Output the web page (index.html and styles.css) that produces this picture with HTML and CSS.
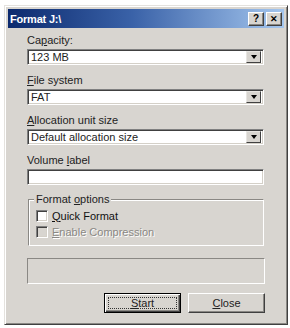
FILE: index.html
```html
<!DOCTYPE html>
<html>
<head>
<meta charset="utf-8">
<link rel="stylesheet" href="styles.css">
</head>
<body>
<div class="window">
  <div class="titlebar">
    <span class="title">Format J:\</span>
    <div class="tbtns">
      <span class="tbtn">?</span>
      <span class="tbtn x">✕</span>
    </div>
  </div>
  <div class="content">
    <div class="field">
      <div class="label">Ca<u>p</u>acity:</div>
      <div class="combo"><span class="val">123 MB</span><span class="drop"><i class="arrow"></i></span></div>
    </div>
    <div class="field">
      <div class="label"><u>F</u>ile system</div>
      <div class="combo"><span class="val">FAT</span><span class="drop"><i class="arrow"></i></span></div>
    </div>
    <div class="field">
      <div class="label"><u>A</u>llocation unit size</div>
      <div class="combo"><span class="val">Default allocation size</span><span class="drop"><i class="arrow"></i></span></div>
    </div>
    <div class="field">
      <div class="label">Volume <u>l</u>abel</div>
      <div class="input"></div>
    </div>
    <div class="group">
      <div class="legend">Format <u>o</u>ptions</div>
      <div class="check"><span class="box"></span><span><u>Q</u>uick Format</span></div>
      <div class="check disabled"><span class="box"></span><span><u>E</u>nable Compression</span></div>
    </div>
    <div class="progress"></div>
    <div class="buttons">
      <div class="btn default"><span class="focus"><u>S</u>tart</span></div>
      <div class="btn"><span><u>C</u>lose</span></div>
    </div>
  </div>
</div>
</body>
</html>
```
FILE: styles.css
```css
* { box-sizing: border-box; }
html, body { margin: 0; padding: 0; background: #fff; }
body {
  font-family: "Liberation Sans", Arial, sans-serif;
  font-size: 11px;
  color: #111;
}
.window {
  margin: 5px 0 0 4px;
  width: 284px;
  height: 320px;
  background: #d8d5d0;
  border: 1px solid;
  border-color: #e4e2de #404040 #404040 #e4e2de;
  box-shadow: inset 1px 1px 0 #fff, inset -1px -1px 0 #8a8884;
  padding: 3px;
  display: flex;
  flex-direction: column;
}
.titlebar {
  height: 19px;
  background: linear-gradient(to right, #0c2a6e 0%, #3a62a8 45%, #a4c6ee 100%);
  display: flex;
  align-items: center;
  justify-content: space-between;
  padding: 0 2px 0 2px;
}
.title {
  color: #fff;
  font-weight: bold;
  font-size: 11px;
  letter-spacing: -0.2px;
}
.tbtns { display: flex; gap: 2px; }
.tbtn {
  width: 16px;
  height: 14px;
  background: #d8d5d0;
  border: 1px solid;
  border-color: #fff #404040 #404040 #fff;
  box-shadow: inset -1px -1px 0 #8a8884;
  font-weight: bold;
  font-size: 10px;
  line-height: 12px;
  text-align: center;
  color: #000;
}
.tbtn.x { font-size: 9px; }
.content {
  padding: 6px 20px 0 19px;
  display: flex;
  flex-direction: column;
}
.field { margin-bottom: 9px; }
.label { height: 13px; line-height: 13px; margin-bottom: 2px; color: #222; }
.combo, .input {
  height: 16px;
  background: #fff;
  border: 1px solid;
  border-color: #808080 #fff #fff #808080;
  box-shadow: inset 1px 1px 0 #404040, inset -1px -1px 0 #d4d0c8;
  display: flex;
  align-items: center;
  padding: 2px;
}
.val { flex: 1; padding-left: 1px; line-height: 12px; color: #222; }
.drop {
  width: 15px;
  height: 12px;
  background: #d8d5d0;
  border: 1px solid;
  border-color: #e8e6e2 #404040 #404040 #e8e6e2;
  display: flex;
  align-items: center;
  justify-content: center;
}
.arrow {
  width: 0; height: 0;
  border-left: 3.5px solid transparent;
  border-right: 3.5px solid transparent;
  border-top: 4px solid #000;
}
.group {
  position: relative;
  margin-top: 5px;
  margin-left: 1px;
  height: 47px;
  border: 1px solid;
  border-color: #8a8884 #fff #fff #8a8884;
  box-shadow: inset 1px 1px 0 #fff;
  padding: 9px 0 0 7px;
  display: flex;
  flex-direction: column;
  gap: 3px;
}
.legend {
  position: absolute;
  top: -7px;
  left: 5px;
  padding: 0 2px;
  background: #d8d5d0;
  line-height: 13px;
  color: #222;
}
.check { display: flex; align-items: center; gap: 4px; height: 13px; }
.box {
  width: 12px; height: 12px;
  background: #fff;
  border: 1px solid;
  border-color: #808080 #fff #fff #808080;
  box-shadow: inset 1px 1px 0 #404040, inset -1px -1px 0 #d4d0c8;
}
.check.disabled { color: #8a8884; text-shadow: 1px 1px 0 #fff; }
.check.disabled .box { background: #d8d5d0; }
.progress {
  margin-top: 12px;
  height: 26px;
  border: 1px solid;
  border-color: #8a8884 #fff #fff #8a8884;
  margin-right: -1px;
}
.buttons {
  display: flex;
  justify-content: flex-end;
  gap: 7px;
  margin-top: 9px;
  margin-right: -1px;
}
.btn {
  width: 77px;
  height: 20px;
  border: 1px solid;
  border-color: #fff #404040 #404040 #fff;
  box-shadow: inset -1px -1px 0 #8a8884;
  display: flex;
  align-items: center;
  justify-content: center;
  color: #222;
}
.btn.default {
  border: 1px solid #000;
  box-shadow: inset 1px 1px 0 #fff, inset -1px -1px 0 #404040, inset -2px -2px 0 #8a8884;
  padding: 3px;
}
.focus {
  flex: 1;
  align-self: stretch;
  border: 1px dotted #333;
  display: flex;
  align-items: center;
  justify-content: center;
}
```
